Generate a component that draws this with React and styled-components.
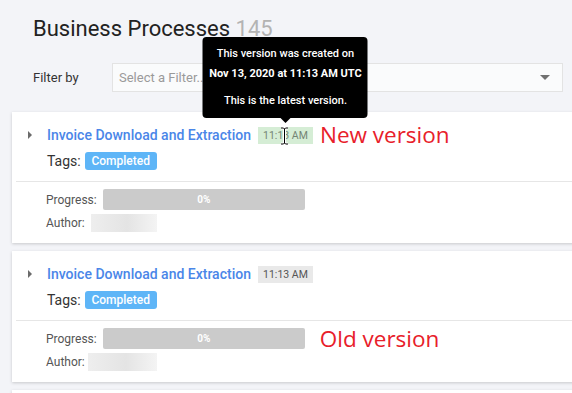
import React from 'react'
import styled, { createGlobalStyle } from 'styled-components'

const GlobalStyle = createGlobalStyle`
  html, body {
    margin: 0;
    padding: 0;
    background: #f3f4f8;
    font-family: Roboto, "Liberation Sans", sans-serif;
    overflow: hidden;
    height: 393px;
  }
`

const Page = styled.div`
  width: 640px;
  padding-left: 12px;
`

const Header = styled.div`
  padding: 14px 0 0 21px;
`

const Title = styled.h1`
  margin: 0;
  font-size: 22px;
  font-weight: 400;
  line-height: 30px;
  color: #222;
`

const Count = styled.span`
  color: #b3b3b3;
`

const FilterRow = styled.div`
  display: flex;
  align-items: center;
  margin-top: 19px;
`

const FilterLabel = styled.span`
  width: 79px;
  font-size: 13px;
  color: #333;
`

const Select = styled.div`
  box-sizing: border-box;
  width: 451px;
  height: 29px;
  display: flex;
  align-items: center;
  justify-content: space-between;
  padding: 0 12px 0 6px;
  background: #fafbfc;
  border: 1px solid #e3e3e3;
  font-size: 13px;
  color: #9a9a9a;
`

const Caret = styled.span`
  width: 0;
  height: 0;
  border-left: 5px solid transparent;
  border-right: 5px solid transparent;
  border-top: 5px solid #707070;
`

const List = styled.div`
  display: flex;
  flex-direction: column;
  gap: 8px;
  margin-top: 20px;
`

const Card = styled.div`
  background: #fff;
  box-shadow: 0 1px 3px rgba(0, 0, 0, 0.18);
`

const Top = styled.div`
  display: flex;
  flex-direction: column;
  gap: 8px;
  padding: 14px 0 11px 16px;
`

const Row = styled.div`
  display: flex;
  align-items: center;
  height: ${p => p.h || 18}px;
`

const Expander = styled.span`
  width: 0;
  height: 0;
  border-top: 4px solid transparent;
  border-bottom: 4px solid transparent;
  border-left: 4px solid #6b6b6b;
  margin-right: 15px;
`

const ProcessLink = styled.a`
  font-size: 14px;
  font-weight: 500;
  color: #4a86e8;
  text-decoration: none;
`

const TimeWrap = styled.span`
  position: relative;
  margin-left: 7px;
`

const TimeBadge = styled.span`
  display: flex;
  align-items: center;
  justify-content: center;
  width: 55px;
  height: 17px;
  font-size: 10.5px;
  color: ${p => (p.latest ? '#748474' : '#555')};
  background: ${p => (p.latest ? '#d5edd5' : '#e9e9e9')};
`

const Tooltip = styled.div`
  position: absolute;
  left: 50%;
  bottom: calc(100% + 9px);
  transform: translateX(-50%);
  box-sizing: border-box;
  width: 165px;
  height: 81px;
  padding-top: 7px;
  background: #000;
  border-radius: 4px;
  color: #fff;
  font-size: 11px;
  font-weight: 500;
  line-height: 20px;
  text-align: center;
  white-space: nowrap;

  &::after {
    content: '';
    position: absolute;
    left: 50%;
    top: 100%;
    margin-left: -5px;
    border-left: 5px solid transparent;
    border-right: 5px solid transparent;
    border-top: 5px solid #000;
  }
`

const TipLine = styled.div`
  font-weight: ${p => (p.bold ? 700 : 500)};
  margin-top: ${p => p.gap || 0}px;
`

const Cursor = styled.svg`
  position: absolute;
  left: 22px;
  top: 0;
`

const Note = styled.span`
  margin-left: ${p => p.gap}px;
  font-family: "Open Sans", "Noto Sans", sans-serif;
  font-size: 22.5px;
  color: #e8202a;
  line-height: 18px;
  white-space: nowrap;
`

const TagsLabel = styled.span`
  font-size: 14px;
  color: #333;
  margin-left: 19px;
  margin-right: 4px;
`

const Tag = styled.span`
  display: flex;
  align-items: center;
  justify-content: center;
  width: 72px;
  height: 18px;
  border-radius: 3px;
  background: #5eb5f7;
  color: #fff;
  font-size: 12px;
  font-weight: 500;
`

const Divider = styled.div`
  margin-left: 4px;
  border-top: 1px solid #e6e6e6;
`

const Bottom = styled.div`
  display: flex;
  flex-direction: column;
  gap: 4px;
  padding: 7px 0 11px 34px;
`

const MetaLabel = styled.span`
  font-size: 12px;
  color: #555;
  margin-right: ${p => p.gap}px;
`

const ProgressBar = styled.div`
  display: flex;
  align-items: center;
  justify-content: center;
  width: 202px;
  height: 21px;
  border-radius: 2px;
  background: #cbcbcb;
  color: #fff;
  font-size: 10px;
  font-weight: 700;
`

const Blurred = styled.div`
  width: ${p => p.w}px;
  height: 18px;
  background: linear-gradient(to right, #eeeeee, #e4e4e4 55%, #f4f4f4);
`

const IBeam = () => (
  <Cursor width="9" height="18" viewBox="0 0 9 18">
    <path d="M1 1h2.5l1 1 1-1H8M4.5 2v14M1 17h2.5l1-1 1 1H8" fill="none" stroke="#fff" strokeWidth="3" />
    <path d="M1 1h2.5l1 1 1-1H8M4.5 2v14M1 17h2.5l1-1 1 1H8" fill="none" stroke="#000" strokeWidth="1" />
  </Cursor>
)

const ProcessCard = ({ latest, authorWidth, authorGap }) => (
  <Card>
    <Top>
      <Row>
        <Expander />
        <ProcessLink href="#">Invoice Download and Extraction</ProcessLink>
        <TimeWrap>
          {latest && (
            <Tooltip>
              <TipLine>This version was created on</TipLine>
              <TipLine bold>Nov 13, 2020 at 11:13 AM UTC</TipLine>
              <TipLine gap={7}>This is the latest version.</TipLine>
            </Tooltip>
          )}
          <TimeBadge latest={latest}>11:13 AM</TimeBadge>
          {latest && <IBeam />}
        </TimeWrap>
        {latest && <Note gap={7}>New version</Note>}
      </Row>
      <Row>
        <TagsLabel>Tags:</TagsLabel>
        <Tag>Completed</Tag>
      </Row>
    </Top>
    <Divider />
    <Bottom>
      <Row h={21}>
        <MetaLabel gap={6}>Progress:</MetaLabel>
        <ProgressBar>0%</ProgressBar>
        {!latest && <Note gap={15}>Old version</Note>}
      </Row>
      <Row>
        <MetaLabel gap={authorGap}>Author:</MetaLabel>
        <Blurred w={authorWidth} />
      </Row>
    </Bottom>
  </Card>
)

export default function App() {
  return (
    <Page>
      <GlobalStyle />
      <Header>
        <Title>
          Business Processes <Count>145</Count>
        </Title>
        <FilterRow>
          <FilterLabel>Filter by</FilterLabel>
          <Select>
            Select a Filter...
            <Caret />
          </Select>
        </FilterRow>
      </Header>
      <List>
        <ProcessCard latest authorWidth={66} authorGap={6} />
        <ProcessCard authorWidth={69} authorGap={3} />
        <Card style={{ height: 40 }} />
      </List>
    </Page>
  )
}
